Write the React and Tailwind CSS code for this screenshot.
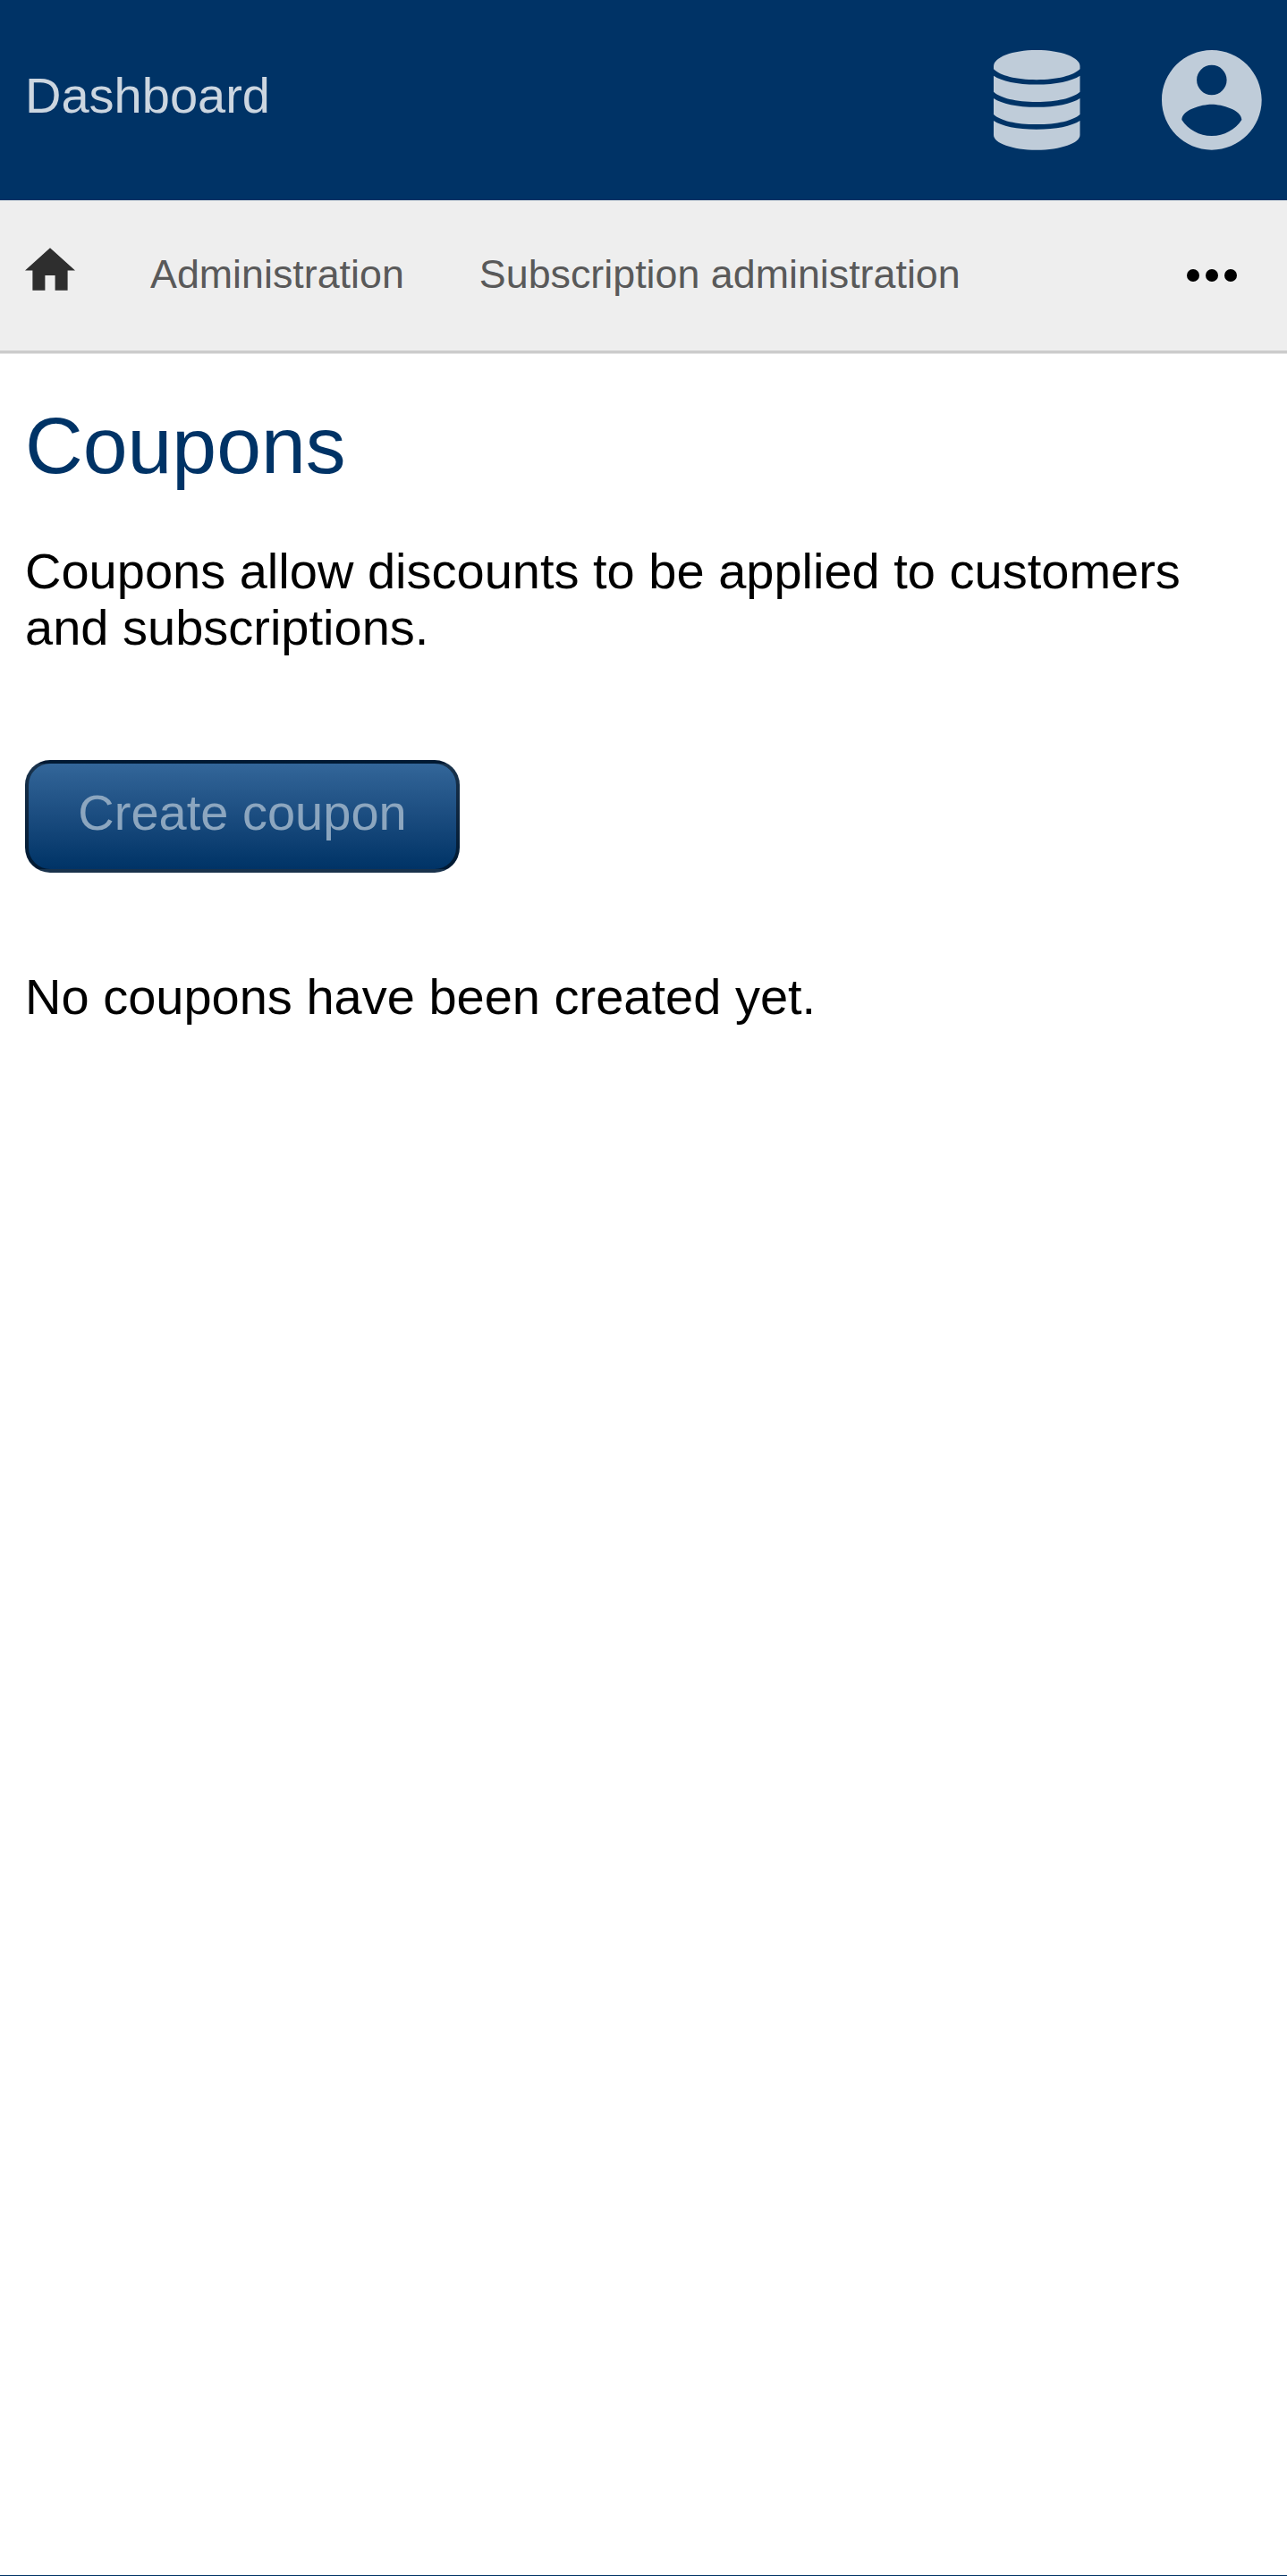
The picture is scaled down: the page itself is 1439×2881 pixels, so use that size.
export default function App() {
  return (
    <div className="flex h-[2881px] w-[1439px] flex-col border-b border-[#003366] bg-white font-['Liberation_Sans',Arial,sans-serif] text-[56px] leading-[63px] text-black">
      <header className="flex h-[224px] shrink-0 items-start justify-between bg-[#003366] pr-[28.5px] pl-7 pt-14">
        <a className="mt-[19px] text-[#ccd6e0]">Dashboard</a>
        <div className="flex gap-[91.300px]">
          <svg className="h-[112px] w-[98px] fill-[#bfccd9]" viewBox="0 0 98 112">
            <path d="M1 21.300V18C1 8 22 0 49 0S97.500 8 97.500 18V21.300C90 28.500 72 33.200 49 33.200S8 28.500 1 21.300Z" />
            <path d="M1 28.700C10 34.800 27 38.500 49 38.500S88 34.800 97.500 28.700V46.700C90 53.500 72 57.900 49 57.900S8 53.500 1 46.700Z" />
            <path d="M1 53.900C10 60 27 63.700 49 63.700S88 60 97.500 53.900V71.900C90 78.700 72 83.100 49 83.100S8 78.700 1 71.900Z" />
            <path d="M1 79C10 85 27 88.800 49 88.800S88 85 97.500 79V95C97.500 104 76 111.800 49 111.800S1 104 1 95Z" />
          </svg>
          <svg className="size-[111.700px] fill-[#bfccd9]" viewBox="2 2 20 20">
            <path d="M12 2C6.480 2 2 6.480 2 12s4.480 10 10 10 10-4.480 10-10S17.520 2 12 2zm0 3c1.660 0 3 1.340 3 3s-1.340 3-3 3-3-1.340-3-3 1.340-3 3-3zm0 14.200c-2.500 0-4.710-1.280-6-3.220.030-1.990 4-3.080 6-3.080 1.990 0 5.970 1.090 6 3.080-1.290 1.940-3.500 3.220-6 3.220z" />
          </svg>
        </div>
      </header>
      <nav className="flex h-[171px] shrink-0 items-start border-b-[3px] border-[#cccccc] bg-[#eeeeee] px-7 pt-[52px] text-[44.800px] leading-[60px] text-[#595959]">
        <svg className="mt-px h-[48px] w-[56px] fill-[#2e2e2e]" viewBox="2 3 20 17">
          <path d="M10 20v-6h4v6h5v-8h3L12 3 2 12h3v8z" />
        </svg>
        <a className="ml-[84px]">Administration</a>
        <a className="ml-[84px]">Subscription administration</a>
        <svg className="mt-[25px] mr-[28.500px] ml-auto h-[14px] w-[56px] fill-black" viewBox="4 10 16 4">
          <circle cx="6" cy="12" r="2" />
          <circle cx="12" cy="12" r="2" />
          <circle cx="18" cy="12" r="2" />
        </svg>
      </nav>
      <main className="flex flex-col items-start border-t border-[#e6e6e6] px-7">
        <h1 className="mt-[51px] text-[89.600px] leading-[102px] text-[#003366]">Coupons</h1>
        <p className="mt-[58px]">Coupons allow discounts to be applied to customers and subscriptions.</p>
        <button className="mt-[117px] h-[126px] w-[486px] rounded-[28px] border-[4px] border-black/50 bg-linear-to-b from-[#336699] to-[#003366] pb-[9px] text-[#8ca6bf]">Create coupon</button>
        <p className="mt-[107px]">No coupons have been created yet.</p>
      </main>
    </div>
  );
}
